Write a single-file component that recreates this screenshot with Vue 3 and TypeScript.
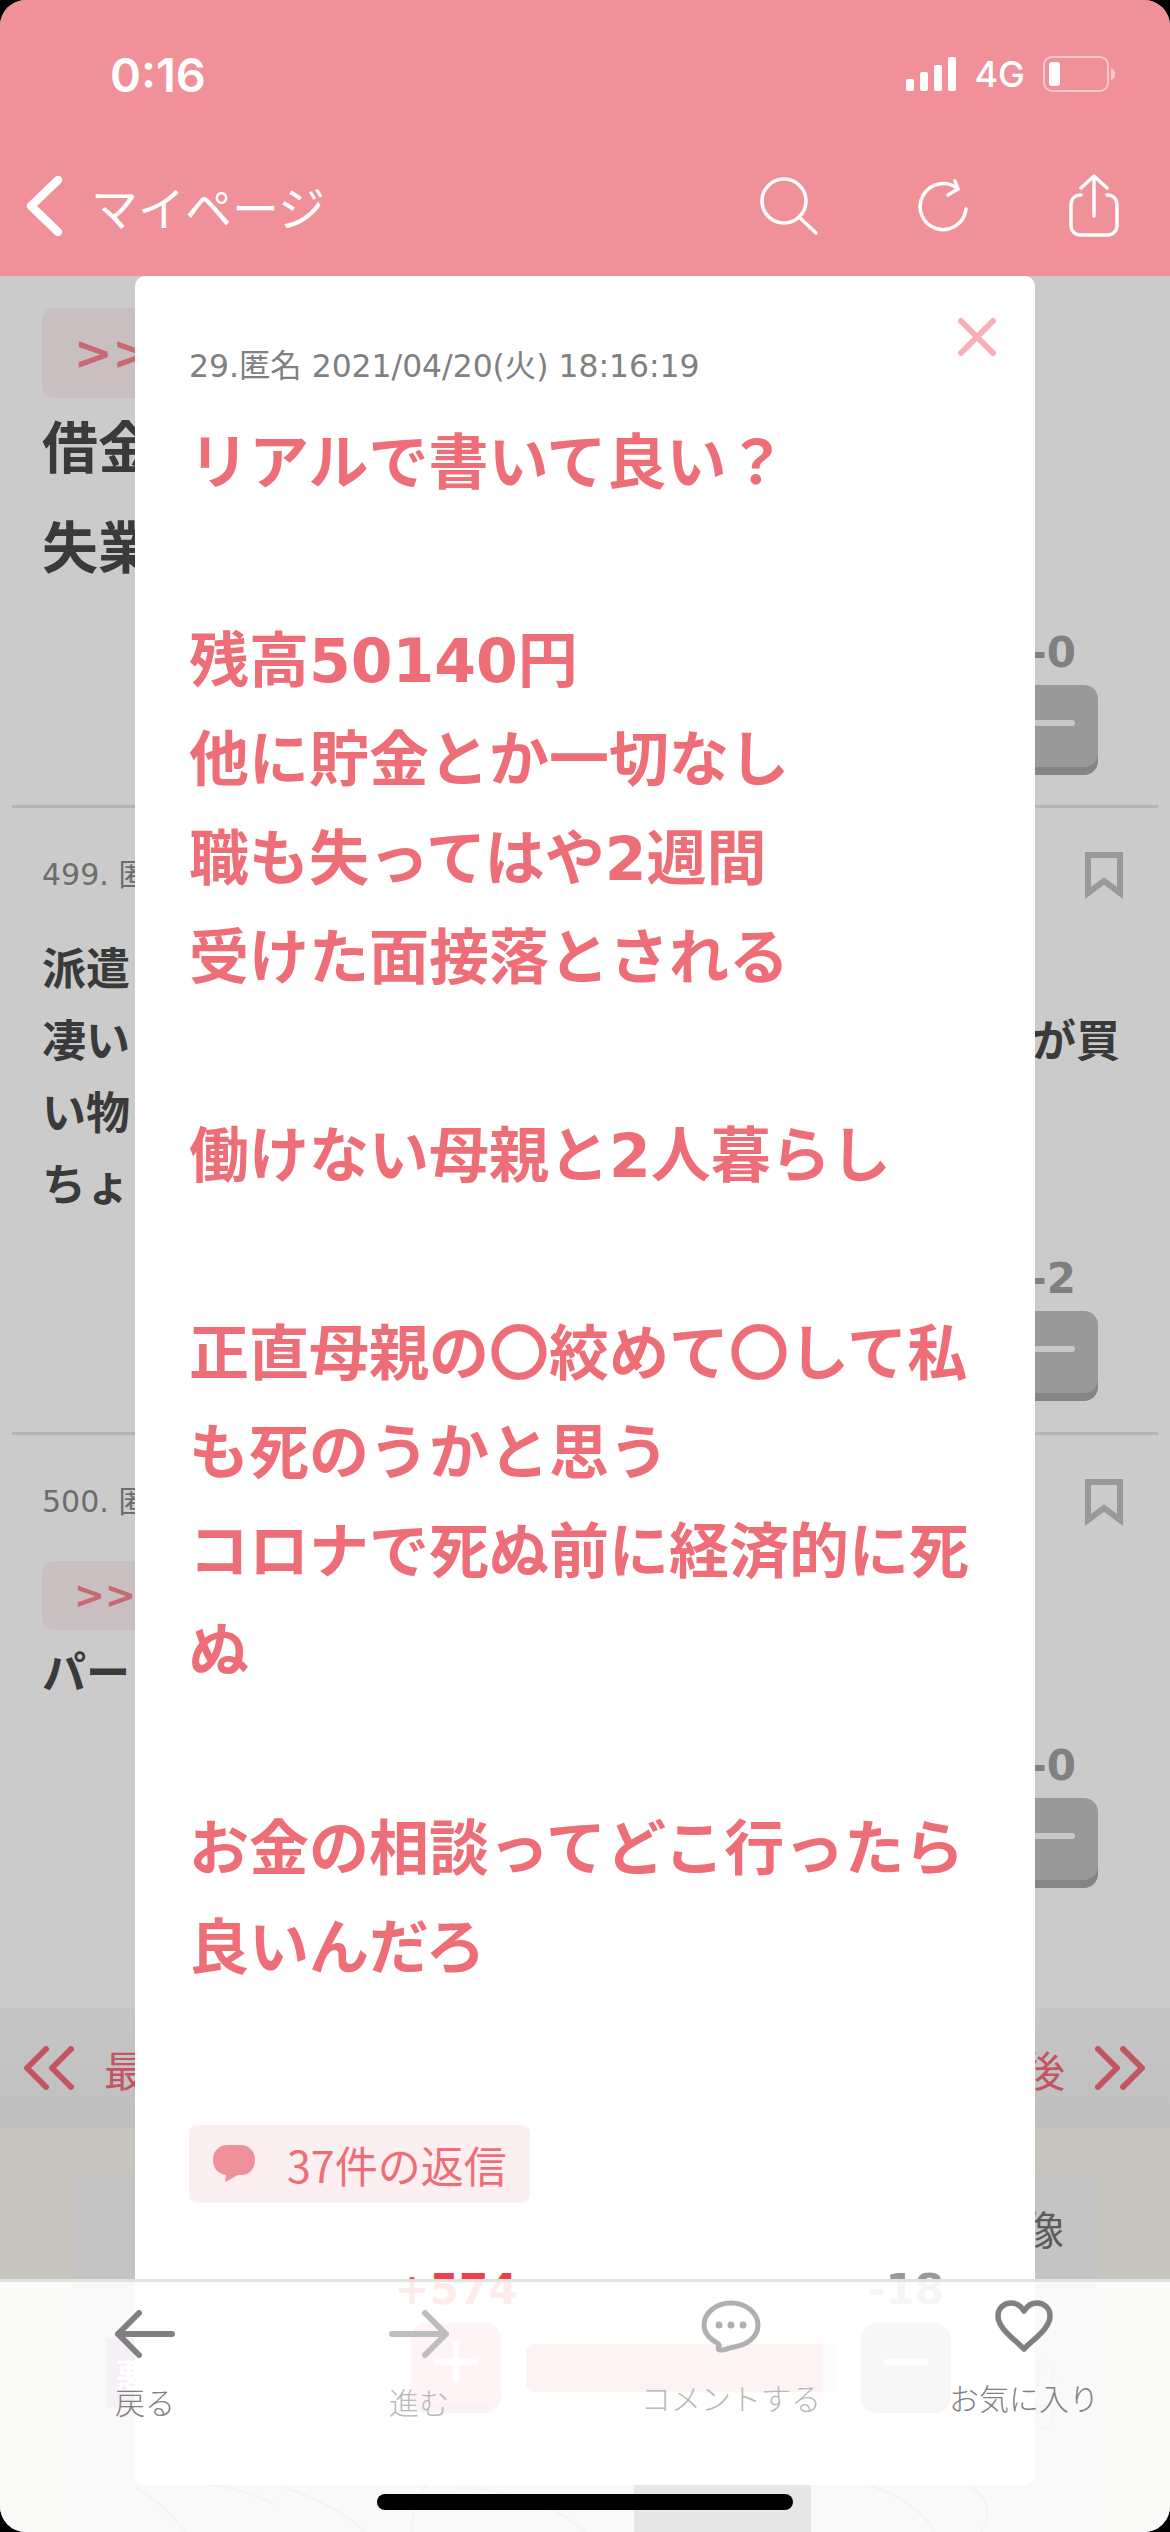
<script setup lang="ts">
interface BgRow {
  id: number;
  kind: "first" | "mid" | "last";
  meta?: string;
  anchor?: boolean;
  lines: { left: string; right?: string }[];
  score: string;
}

const bgRows: BgRow[] = [
  { id: 498, kind: "first", anchor: true, lines: [{ left: "借金" }, { left: "失業" }], score: "-0" },
  {
    id: 499,
    kind: "mid",
    meta: "499. 匿",
    lines: [{ left: "派遣" }, { left: "凄い", right: "が買" }, { left: "い物" }, { left: "ちょ" }],
    score: "-2",
  },
  { id: 500, kind: "last", meta: "500. 匿", anchor: true, lines: [{ left: "パー" }], score: "-0" },
];

const bodyLines = [
  "リアルで書いて良い？",
  "",
  "残高50140円",
  "他に貯金とか一切なし",
  "職も失ってはや2週間",
  "受けた面接落とされる",
  "",
  "働けない母親と2人暮らし",
  "",
  "正直母親の〇絞めて〇して私",
  "も死のうかと思う",
  "コロナで死ぬ前に経済的に死",
  "ぬ",
  "",
  "お金の相談ってどこ行ったら",
  "良いんだろ",
];
</script>

<template>
  <div class="phone">
    <header class="top">
      <div class="status">
        <span class="clock">0:16</span>
        <div class="status-right">
          <svg class="signal" width="50" height="34" viewBox="0 0 50 34">
            <rect x="0" y="22" width="8" height="12" rx="2" />
            <rect x="14" y="15" width="8" height="19" rx="2" />
            <rect x="28" y="8" width="8" height="26" rx="2" />
            <rect x="42" y="0" width="8" height="34" rx="2" />
          </svg>
          <span class="net">4G</span>
          <svg class="battery" width="72" height="36" viewBox="0 0 72 36">
            <rect x="1" y="1" width="64" height="34" rx="8" fill="none" stroke="#fff" stroke-opacity=".5" stroke-width="2" />
            <rect x="6" y="6" width="11" height="24" rx="3" fill="#fff" />
            <path d="M68 12c3 1 4 3 4 6s-1 5-4 6z" fill="#fff" fill-opacity=".5" />
          </svg>
        </div>
      </div>
      <nav class="nav">
        <div class="nav-back">
          <svg width="40" height="62" viewBox="0 0 40 62" fill="none" stroke="#fff" stroke-width="8.5" stroke-linecap="round" stroke-linejoin="round">
            <path d="M33 5 6 31l27 26" />
          </svg>
          <span>マイページ</span>
        </div>
        <div class="nav-icons">
          <svg width="58" height="58" viewBox="0 0 58 58" fill="none" stroke="#fff" stroke-width="3.5" stroke-linecap="round">
            <circle cx="24" cy="24" r="22" />
            <path d="m39 40 17 16" />
          </svg>
          <svg width="52" height="54" viewBox="0 0 52 54" fill="none" stroke="#fff" stroke-width="3.5" stroke-linecap="round" stroke-linejoin="round">
            <path d="M49 30a23 23 0 1 1-8-20" />
            <path d="m38 2 3 8-10 6" />
          </svg>
          <svg width="52" height="64" viewBox="0 0 52 64" fill="none" stroke="#fff" stroke-width="3.5" stroke-linecap="round" stroke-linejoin="round">
            <path d="M26 42V2M13 14 26 2l13 12" />
            <path d="M13 21c-6 0-10 4-10 10v20c0 6 4 10 10 10h26c6 0 10-4 10-10V31c0-6-4-10-10-10" />
          </svg>
        </div>
      </nav>
    </header>

    <main class="behind">
      <article v-for="row in bgRows" :key="row.id" class="bg-row" :class="row.kind">
        <div v-if="row.meta" class="bg-meta">
          <span>{{ row.meta }}</span>
          <svg width="38" height="47" viewBox="0 0 38 47" fill="none" stroke="#999" stroke-width="6">
            <path d="M3 3h32v38L19 29 3 41z" />
          </svg>
        </div>
        <div v-if="row.anchor" class="bg-anchor"><span>&gt;&gt;</span></div>
        <p v-for="line in row.lines" :key="line.left" class="bg-line">
          <span>{{ line.left }}</span>
          <span v-if="line.right">{{ line.right }}</span>
        </p>
        <div class="bg-vote">
          <span class="bg-score">{{ row.score }}</span>
          <div class="bg-minus"><i /></div>
        </div>
      </article>
      <div class="bg-pager">
        <div class="pager-side">
          <svg width="50" height="44" viewBox="0 0 50 44" fill="none" stroke="#c2555f" stroke-width="6" stroke-linecap="round" stroke-linejoin="round">
            <path d="M22 3 3 22l19 19M47 3 28 22l19 19" />
          </svg>
          <span>最</span>
        </div>
        <div class="pager-side">
          <span>後</span>
          <svg width="50" height="44" viewBox="0 0 50 44" fill="none" stroke="#c2555f" stroke-width="6" stroke-linecap="round" stroke-linejoin="round">
            <path d="m3 3 19 19L3 41M28 3l19 19-19 19" />
          </svg>
        </div>
      </div>
      <div class="bg-ad">
        <div class="ad-card">
          <div class="ad-label"><span>像</span></div>
          <div class="ad-image">
            <span class="ad-panel left">
              <svg width="528" height="194" viewBox="0 0 528 194" fill="none" stroke="#8e8888" stroke-width="2">
                <path d="M30 150c20 10 38 30 50 44M70 146c30-4 70 6 98 20M180 150c30 10 60 26 80 44M320 146c-10 16-14 34-14 48M350 150c40 0 90 10 130 44" />
              </svg>
            </span>
            <span class="ad-panel dark" />
            <span class="ad-panel right">
              <svg width="253" height="194" viewBox="0 0 253 194" fill="none" stroke="#8e8888" stroke-width="2">
                <path d="M60 148c30 10 50 24 64 46M160 150c20 10 20 30 10 44" />
              </svg>
              <span class="ad-note">れ<br />り</span>
            </span>
            <span class="ad-tag">悪</span>
          </div>
        </div>
      </div>
    </main>

    <section class="modal">
      <svg class="close" width="38" height="38" viewBox="0 0 38 38" fill="none" stroke="#f7b0b6" stroke-width="6" stroke-linecap="round">
        <path d="m3 3 32 32M35 3 3 35" />
      </svg>
      <p class="post-meta">29.匿名 2021/04/20(火) 18:16:19</p>
      <div class="post-body">
        <p v-for="(line, i) in bodyLines" :key="i">{{ line || "\u00a0" }}</p>
      </div>
      <div class="reply">
        <svg width="42" height="38" viewBox="0 0 42 38">
          <path d="M15 0h12c9 0 15 6 15 15s-6 15-14 15h-3c-3 1-8 5-13 7l1-7C5 29 0 23 0 15 0 6 6 0 15 0z" fill="#f09199" />
        </svg>
        <span>37件の返信</span>
      </div>
      <div class="votes">
        <div class="vote-col">
          <span class="plus-score">+574</span>
          <div class="vote-btn plus"><i /><i class="bar-v" /></div>
        </div>
        <div class="vote-bar"><div class="vote-fill" /></div>
        <div class="vote-col">
          <span class="minus-score">-18</span>
          <div class="vote-btn minus"><i /></div>
        </div>
      </div>
    </section>

    <footer class="tabs">
      <div class="tab tab-low">
        <svg width="60" height="48" viewBox="0 0 60 48" fill="none" stroke="#808080" stroke-width="6" stroke-linecap="round" stroke-linejoin="round">
          <path d="M24 3 3 24l21 21M3 24h54" />
        </svg>
        <span>戻る</span>
      </div>
      <div class="tab tab-low faded">
        <svg width="60" height="48" viewBox="0 0 60 48" fill="none" stroke="#bdbdbd" stroke-width="6" stroke-linecap="round" stroke-linejoin="round">
          <path d="m36 3 21 21-21 21M57 24H3" />
        </svg>
        <span>進む</span>
      </div>
      <div class="tab tab-high faded">
        <svg width="60" height="53" viewBox="0 0 60 53" fill="none">
          <path d="M30 3C45 3 57 13 57 25c0 13-12 20-24 22-4 .5-9 3-12 3-3 .5-5-1-3-4 .5-1 0-2-2-3C9 39 3 33 3 25 3 13 15 3 30 3z" stroke="#b0b0b0" stroke-width="5" stroke-linejoin="round" />
          <circle cx="18" cy="25" r="3.5" fill="#b0b0b0" />
          <circle cx="30" cy="25" r="3.5" fill="#b0b0b0" />
          <circle cx="42" cy="25" r="3.5" fill="#b0b0b0" />
        </svg>
        <span>コメントする</span>
      </div>
      <div class="tab tab-high">
        <svg width="58" height="53" viewBox="0 0 58 53" fill="none" stroke="#808080" stroke-width="5.5" stroke-linejoin="round">
          <path d="M29 49C18 38 3 28 3 16 3 8 9 3 16 3c6 0 10 3 13 8 3-5 7-8 13-8 7 0 13 5 13 13 0 12-15 22-26 33z" />
        </svg>
        <span>お気に入り</span>
      </div>
    </footer>

    <div class="home-bar" />
  </div>
</template>

<style scoped>
.phone {
  position: relative;
  width: 1170px;
  height: 2532px;
  overflow: hidden;
  background: #cbcbcb;
  border-radius: 26px;
  font-family: "DejaVu Sans", "Noto Sans CJK JP", sans-serif;
}

.top {
  height: 276px;
  background: #f09199;
  color: #fff;
  box-sizing: border-box;
  padding-top: 44px;
}

.status {
  display: flex;
  align-items: center;
  justify-content: space-between;
  padding: 0 55px 0 110px;
  height: 60px;
}

.clock {
  font-family: "Inter", "Liberation Sans", sans-serif;
  font-size: 47px;
  font-weight: 600;
}

.status-right {
  display: flex;
  align-items: center;
  gap: 18px;
}

.signal {
  fill: #fff;
}

.net {
  font-family: "Inter", "Liberation Sans", sans-serif;
  font-size: 36px;
  font-weight: 500;
}

.nav {
  display: flex;
  align-items: center;
  justify-content: space-between;
  height: 68px;
  margin-top: 68px;
  padding: 0 50px 0 25px;
}

.nav-back {
  display: flex;
  align-items: center;
  gap: 26px;
  font-family: "Noto Sans CJK JP", sans-serif;
  font-size: 47px;
  line-height: 60px;
}

.nav-icons {
  display: flex;
  align-items: center;
  gap: 99px;
}

.behind {
  display: flex;
  flex-direction: column;
}

.bg-row {
  position: relative;
  box-sizing: border-box;
  margin: 0 12px;
  padding: 32px 30px 0;
  border-bottom: 3px solid #b4b4b4;
}

.bg-row.first {
  height: 532px;
}

.bg-row.mid {
  height: 627px;
}

.bg-row.last {
  height: 573px;
  border-bottom: 0;
}

.bg-row.mid,
.bg-row.last {
  padding-top: 37px;
}

.bg-meta {
  display: flex;
  align-items: center;
  justify-content: space-between;
  height: 60px;
  margin: 0 5px 29px 0;
  font-size: 30px;
  color: #6d6d6d;
}

.bg-meta span {
  margin-bottom: 6px;
}

.bg-anchor {
  width: 300px;
  height: 90px;
  margin-bottom: 1px;
  padding-left: 32px;
  box-sizing: border-box;
  background: #c9bfc0;
  border-radius: 12px;
  color: #c76a73;
  font-size: 46px;
  font-weight: 700;
  line-height: 90px;
}

.bg-row.last .bg-anchor {
  height: 69px;
  margin-top: 7px;
  margin-bottom: 8px;
  font-size: 37px;
  line-height: 69px;
}

.bg-line {
  display: flex;
  justify-content: space-between;
  margin: 0;
  padding-right: 8px;
  font-size: 44px;
  font-weight: 700;
  line-height: 72px;
  color: #3a3a3a;
}

.bg-row.first .bg-line {
  font-size: 56px;
  line-height: 100px;
}

.bg-vote {
  position: absolute;
  right: 60px;
  bottom: 38px;
  width: 90px;
  text-align: right;
}

.bg-row.mid .bg-vote {
  bottom: 39px;
}

.bg-row.last .bg-vote {
  bottom: 128px;
}

.bg-score {
  display: block;
  padding-right: 22px;
  font-size: 42px;
  font-weight: 700;
  color: #808080;
  line-height: 50px;
}

.bg-minus {
  display: flex;
  align-items: center;
  justify-content: center;
  box-sizing: border-box;
  height: 82px;
  margin-top: 7px;
  padding-bottom: 6px;
  background: #999;
  border-radius: 14px;
  box-shadow: 0 8px 0 #858585;
}

.bg-minus i {
  width: 44px;
  height: 6px;
  background: #c8c8c8;
  border-radius: 3px;
}

.bg-pager {
  display: flex;
  align-items: center;
  justify-content: space-between;
  height: 120px;
  padding: 0 25px 0 24px;
  background: linear-gradient(#c6c6c6, #bfbfbf);
  color: #c2555f;
  font-family: "Noto Sans CJK JP", sans-serif;
  font-size: 42px;
}

.pager-side {
  display: flex;
  align-items: center;
  gap: 30px;
}

.bg-ad {
  height: 404px;
  padding: 45px 72px 0;
  box-sizing: border-box;
  background: #c8c5be;
}

.ad-card {
  height: 359px;
  padding: 30px 34px 0;
  box-sizing: border-box;
  background: #c4c4c4;
  border-radius: 12px 12px 0 0;
  font-family: "Noto Sans CJK JP", sans-serif;
  color: #5c5c5c;
}

.ad-label {
  display: flex;
  justify-content: flex-end;
  height: 135px;
  font-size: 40px;
  line-height: 50px;
}

.ad-image {
  position: relative;
  display: flex;
  height: 194px;
  background: #d2bfc4;
}

.ad-tag {
  position: absolute;
  left: 0;
  top: 0;
  width: 36px;
  height: 70px;
  padding-left: 10px;
  background: #9c6c9c;
  color: #fff;
  font-size: 32px;
  font-weight: 700;
  line-height: 70px;
  box-sizing: border-box;
}

.ad-panel {
  position: relative;
  display: block;
  background: #c4bebc;
}

.ad-panel.left {
  width: 528px;
}

.ad-panel.dark {
  width: 178px;
  background: #101010;
}

.ad-panel.right {
  width: 253px;
}

.ad-note {
  position: absolute;
  right: 2px;
  top: 10px;
  color: #c98c94;
  font-size: 34px;
  line-height: 44px;
}

.modal {
  position: absolute;
  left: 135px;
  top: 276px;
  width: 900px;
  height: 2209px;
  box-sizing: border-box;
  padding: 68px 54px 0;
  background: #fff;
  border-radius: 10px;
}

.close {
  position: absolute;
  top: 42px;
  right: 39px;
}

.post-meta {
  margin: 0;
  font-size: 31.4px;
  line-height: 44px;
  color: #808080;
  white-space: nowrap;
}

.post-body {
  margin-top: 26px;
}

.post-body p {
  margin: 0;
  font-size: 60px;
  font-weight: 700;
  line-height: 99px;
  color: #ee6e78;
  white-space: nowrap;
}

.reply {
  display: flex;
  align-items: center;
  gap: 32px;
  width: 341px;
  height: 78px;
  margin-top: 127px;
  padding-left: 24px;
  box-sizing: border-box;
  background: #fbeff1;
  border-radius: 8px;
  color: #ee6e78;
  font-family: "Noto Sans CJK JP", sans-serif;
  font-size: 43px;
  white-space: nowrap;
}

.votes {
  display: flex;
  align-items: flex-end;
  gap: 25px;
  width: 540px;
  margin: 62px 0 0 222px;
}

.vote-col {
  flex: none;
  display: flex;
  flex-direction: column;
  align-items: center;
  width: 90px;
}

.vote-btn {
  position: relative;
  display: flex;
  align-items: center;
  justify-content: center;
  width: 90px;
  height: 90px;
  margin-top: 8px;
  border-radius: 16px;
}

.vote-btn i {
  position: absolute;
  top: 36px;
  width: 44px;
  height: 6px;
  background: #fff;
  border-radius: 3px;
}

.vote-btn i.bar-v {
  top: 18px;
  width: 6px;
  height: 42px;
}

.plus {
  background: #f08f95;
  box-shadow: inset 0 -10px 0 #e87f86;
}

.minus {
  background: #b0b0b0;
  box-shadow: inset 0 -10px 0 #a2a2a2;
}

.plus-score,
.minus-score {
  font-size: 42px;
  font-weight: 700;
  line-height: 50px;
  white-space: nowrap;
}

.plus-score {
  color: #ef4049;
}

.minus-score {
  color: #999;
}

.vote-bar {
  flex: 1;
  height: 48px;
  margin-bottom: 21px;
  background: #d8d8d8;
  border-radius: 8px;
  overflow: hidden;
}

.vote-fill {
  width: 297px;
  height: 100%;
  background: #ec8088;
}

.tabs {
  position: absolute;
  left: 0;
  right: 0;
  bottom: 0;
  display: grid;
  grid-template-columns: 290px 258px 366px 220px;
  height: 253px;
  box-sizing: border-box;
  background: rgba(255, 255, 255, 0.9);
  border-top: 3px solid #e2e2e2;
}

.tab {
  display: flex;
  flex-direction: column;
  align-items: center;
  font-family: "Noto Sans CJK JP", sans-serif;
  font-size: 30px;
  line-height: 44px;
  font-weight: 300;
  color: #808080;
  white-space: nowrap;
}

.tab.faded {
  color: #b8b8b8;
}

.tab-low {
  padding-top: 28px;
  gap: 21px;
}

.tab-high {
  padding-top: 18px;
  gap: 22px;
}

.home-bar {
  position: absolute;
  left: 377px;
  bottom: 22px;
  width: 416px;
  height: 16px;
  background: #000;
  border-radius: 8px;
}
</style>

<style>
html,
body {
  background: #000;
}
</style>
